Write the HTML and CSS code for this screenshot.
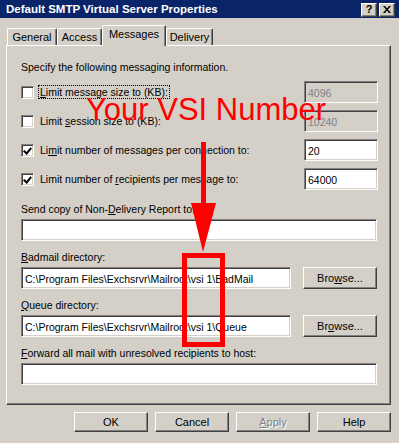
FILE: index.html
```html
<!DOCTYPE html>
<html lang="en">

<head>
    <meta charset="UTF-8">
    <meta name="viewport" content="width=device-width, initial-scale=1.0">
    <title>Default SMTP Virtual Server Properties</title>
    <link rel="stylesheet" href="styles.css">
</head>

<body>
    <div class="dialog">
        <div class="titlebar">
            <span class="title">Default SMTP Virtual Server Properties</span>
            <div class="caption-btns">
                <span class="cap-btn">?</span>
                <span class="cap-btn">
                    <svg width="8" height="7" viewBox="0 0 8 7">
                        <path d="M0 0h2l2 2.5L6 0h2L5 3.5 8 7H6L4 4.5 2 7H0l3-3.5z" fill="#000" />
                    </svg>
                </span>
            </div>
        </div>

        <div class="tabs">
            <div class="tab tab-general">General</div>
            <div class="tab tab-access">Access</div>
            <div class="tab tab-messages active">Messages</div>
            <div class="tab tab-delivery">Delivery</div>
        </div>

        <div class="panel">
            <p class="intro">Specify the following messaging information.</p>

            <div class="check-row first">
                <label class="check"><span class="box"></span><span class="focus"><u>L</u>imit message size to (KB):</span></label>
                <input class="field disabled" value="4096" disabled>
            </div>
            <div class="check-row">
                <label class="check"><span class="box"></span><span>Limit <u>s</u>ession size to (KB):</span></label>
                <input class="field disabled" value="10240" disabled>
            </div>
            <div class="check-row">
                <label class="check"><span class="box checked"></span><span>Li<u>m</u>it number of messages per connection to:</span></label>
                <input class="field" value="20">
            </div>
            <div class="check-row">
                <label class="check"><span class="box checked"></span><span>Limit number of <u>r</u>ecipients per message to:</span></label>
                <input class="field" value="64000">
            </div>

            <div class="group first">
                <div class="label">Send copy of Non-<u>D</u>elivery Report to:</div>
                <input class="field wide" value="">
            </div>
            <div class="group">
                <div class="label"><u>B</u>admail directory:</div>
                <div class="path-row">
                    <input class="field" value="C:\Program Files\Exchsrvr\Mailroot\vsi 1\BadMail">
                    <button class="btn">Bro<u>w</u>se...</button>
                </div>
            </div>
            <div class="group">
                <div class="label"><u>Q</u>ueue directory:</div>
                <div class="path-row">
                    <input class="field" value="C:\Program Files\Exchsrvr\Mailroot\vsi 1\Queue">
                    <button class="btn">Br<u>o</u>wse...</button>
                </div>
            </div>
            <div class="group">
                <div class="label"><u>F</u>orward all mail with unresolved recipients to host:</div>
                <input class="field wide" value="">
            </div>
        </div>

        <div class="actions">
            <button class="btn">OK</button>
            <button class="btn">Cancel</button>
            <button class="btn" disabled><u>A</u>pply</button>
            <button class="btn">Help</button>
        </div>

        <!-- red annotation drawn over the dialog -->
        <div class="note">Your VSI Number</div>
        <svg class="arrow" width="30" height="112" viewBox="0 0 30 112">
            <rect x="11" y="0" width="5" height="63" fill="#ff0000" />
            <polygon points="1,61 26,61 13,110" fill="#ff0000" />
        </svg>
        <div class="mark"></div>
    </div>
</body>

</html>
```

FILE: styles.css
```css
body {
    margin: 0;
    background: #d4d0c8;
    font-family: 'Liberation Sans', Arial, sans-serif;
    font-size: 10.5px;
    color: #000;
}

.dialog {
    position: relative;
    width: 399px;
    height: 443px;
    background: #d4d0c8;
    overflow: hidden;
}

/* Title bar */
.titlebar {
    height: 18px;
    background: #0a246a;
    display: flex;
    align-items: center;
    justify-content: space-between;
    padding: 0 4px 0 6px;
}

.title {
    color: #fff;
    font-weight: bold;
    font-size: 11.5px;
}

.caption-btns {
    display: flex;
    gap: 2px;
    margin-top: 1px;
}

.cap-btn {
    width: 16px;
    height: 14px;
    box-sizing: border-box;
    background: #d4d0c8;
    border: 1px solid;
    border-color: #fff #404040 #404040 #fff;
    box-shadow: inset -1px -1px #808080;
    display: flex;
    align-items: center;
    justify-content: center;
    font-weight: bold;
    font-size: 11px;
    line-height: 1;
}

/* Tabs */
.tabs {
    display: flex;
    align-items: flex-end;
    height: 19px;
    margin-top: 8px;
    padding-left: 7px;
    position: relative;
    z-index: 1;
    font-size: 11px;
}

.tab {
    height: 17px;
    box-sizing: border-box;
    border: 1px solid;
    border-bottom: none;
    border-color: #fff #404040 transparent #fff;
    border-radius: 2px 2px 0 0;
    box-shadow: inset -1px 0 #808080;
    text-align: center;
    line-height: 16px;
}

.tab-general { width: 50px; }
.tab-access { width: 45px; }
.tab-messages { width: 64px; }
.tab-delivery { width: 47px; }

.tab.active {
    height: 21px;
    margin-bottom: -1px;
    background: #d4d0c8;
    line-height: 17px;
}

/* Tab page */
.panel {
    margin-left: 6px;
    width: 385px;
    height: 360px;
    box-sizing: border-box;
    border: 1px solid;
    border-color: #fff #404040 #404040 #fff;
    box-shadow: inset -1px -1px #808080;
    padding: 14px 12px 0 14px;
}

.intro {
    margin: 0;
    line-height: 14px;
}

.check-row {
    display: grid;
    grid-template-columns: 1fr 74px;
    column-gap: 12px;
    align-items: center;
    height: 22px;
    margin-top: 7px;
}

.check {
    display: flex;
    align-items: center;
    gap: 6px;
}

.box {
    width: 13px;
    height: 13px;
    box-sizing: border-box;
    background: #fff;
    border: 1px solid;
    border-color: #808080 #fff #fff #808080;
    box-shadow: inset 1px 1px #404040, inset -1px -1px #d4d0c8;
    position: relative;
}

.box.checked::after {
    content: "";
    position: absolute;
    left: 3px;
    top: 1px;
    width: 3px;
    height: 6px;
    border: solid #000;
    border-width: 0 2px 2px 0;
    transform: rotate(40deg);
}

.focus {
    outline: 1px dotted #000;
    outline-offset: 0;
    padding: 0 1px;
    margin-left: -1px;
}

.field {
    height: 22px;
    box-sizing: border-box;
    width: 100%;
    font: inherit;
    color: #000;
    background: #fff;
    border: 1px solid;
    border-color: #808080 #fff #fff #808080;
    box-shadow: inset 1px 1px #404040, inset -1px -1px #d4d0c8;
    padding: 1px 3px 0;
    margin: 0;
    outline: none;
}

.field.disabled {
    background: #d4d0c8;
    color: #808080;
}

.group {
    margin-top: 9px;
}

.group.first {
    margin-top: 12px;
}

.label {
    line-height: 14px;
    margin-bottom: 3px;
}

.field.wide {
    width: 356px;
}

.path-row {
    display: grid;
    grid-template-columns: 270px 74px;
    column-gap: 12px;
}

.btn {
    height: 22px;
    width: 74px;
    box-sizing: border-box;
    font: inherit;
    font-size: 11px;
    color: #000;
    background: #d4d0c8;
    border: 1px solid;
    border-color: #fff #404040 #404040 #fff;
    box-shadow: inset -1px -1px #808080;
    padding: 0;
    margin: 0;
}

.btn:disabled {
    color: #808080;
    text-shadow: 1px 1px #fff;
}

/* Dialog buttons */
.actions {
    display: flex;
    justify-content: flex-end;
    gap: 7px;
    margin-top: 7px;
    padding-right: 8px;
}

.actions .btn {
    height: 20px;
}

/* Red annotation */
.note {
    position: absolute;
    left: 86px;
    top: 94px;
    font-family: 'Liberation Sans', Arial, sans-serif;
    font-size: 31px;
    line-height: 1;
    color: #ff0000;
    white-space: nowrap;
}

.arrow {
    position: absolute;
    left: 190px;
    top: 142px;
}

.mark {
    position: absolute;
    left: 182px;
    top: 253px;
    width: 43px;
    height: 94px;
    box-sizing: border-box;
    border: 5px solid #ff0000;
}
```
